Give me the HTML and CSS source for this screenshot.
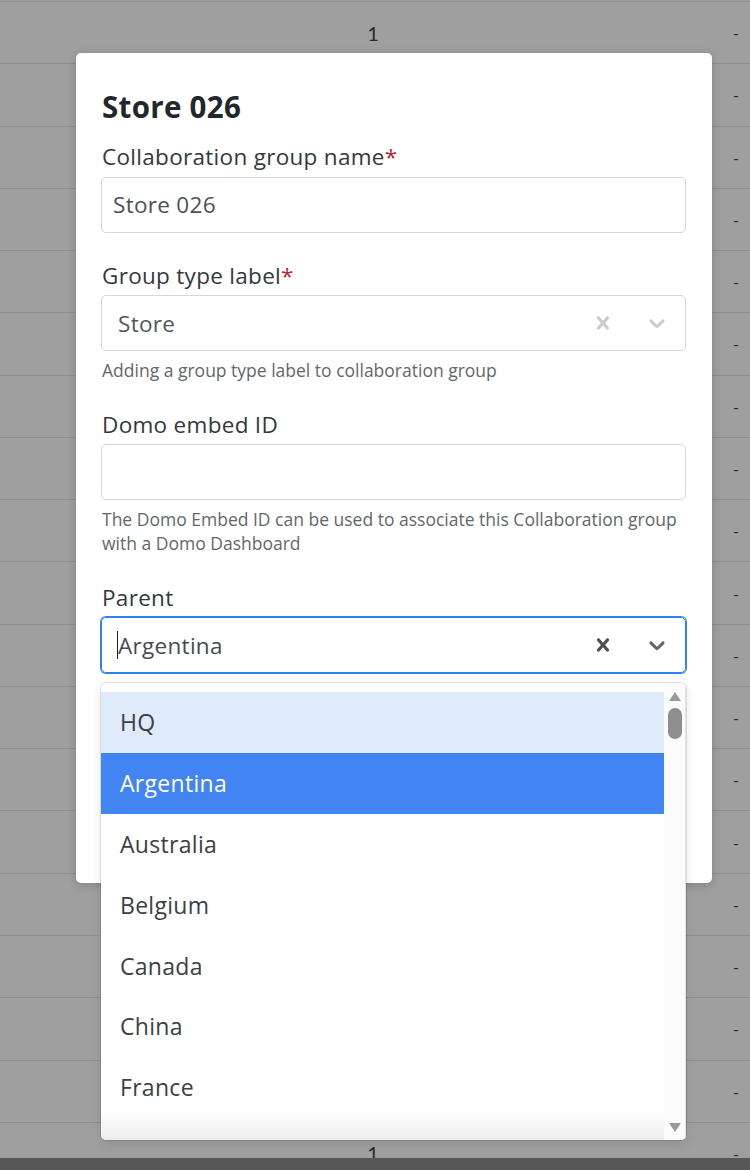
FILE: index.html
```html
<!DOCTYPE html>
<html>
<head>
<meta charset="utf-8">
<link rel="stylesheet" href="styles.css">
</head>
<body>
<div class="page">
  <div class="table">
    <div class="row"><span class="c1">1</span><span class="c2">-</span></div>
    <div class="row"><span class="c1">1</span><span class="c2">-</span></div>
    <div class="row"><span class="c1">1</span><span class="c2">-</span></div>
    <div class="row"><span class="c1">1</span><span class="c2">-</span></div>
    <div class="row"><span class="c1">1</span><span class="c2">-</span></div>
    <div class="row"><span class="c1">1</span><span class="c2">-</span></div>
    <div class="row"><span class="c1">1</span><span class="c2">-</span></div>
    <div class="row"><span class="c1">1</span><span class="c2">-</span></div>
    <div class="row"><span class="c1">1</span><span class="c2">-</span></div>
    <div class="row"><span class="c1">1</span><span class="c2">-</span></div>
    <div class="row"><span class="c1">1</span><span class="c2">-</span></div>
    <div class="row"><span class="c1">1</span><span class="c2">-</span></div>
    <div class="row"><span class="c1">1</span><span class="c2">-</span></div>
    <div class="row"><span class="c1">1</span><span class="c2">-</span></div>
    <div class="row"><span class="c1">1</span><span class="c2">-</span></div>
    <div class="row"><span class="c1">1</span><span class="c2">-</span></div>
    <div class="row"><span class="c1">1</span><span class="c2">-</span></div>
    <div class="row"><span class="c1">1</span><span class="c2">-</span></div>
    <div class="row"><span class="c1">1</span><span class="c2">-</span></div>
  </div>
  <div class="footer"></div>
</div>

<div class="modal">
  <h2 class="title">Store 026</h2>

  <div class="field">
    <div class="label">Collaboration group name<span class="req">*</span></div>
    <div class="input">Store 026</div>
  </div>

  <div class="field">
    <div class="label">Group type label<span class="req">*</span></div>
    <div class="select">
      <div class="value">Store</div>
      <div class="indicators light">
        <span class="ind"><svg viewBox="0 0 20 20" width="26" height="26"><path d="M14.348 14.849c-0.469 0.469-1.229 0.469-1.697 0l-2.651-3.030-2.651 3.029c-0.469 0.469-1.229 0.469-1.697 0-0.469-0.469-0.469-1.229 0-1.697l2.758-3.15-2.759-3.152c-0.469-0.469-0.469-1.228 0-1.697s1.228-0.469 1.697 0l2.652 3.031 2.651-3.031c0.469-0.469 1.228-0.469 1.697 0s0.469 1.229 0 1.697l-2.758 3.152 2.758 3.150c0.469 0.469 0.469 1.229 0 1.698z"/></svg></span>
        <span class="ind"><svg viewBox="0 0 20 20" width="26" height="26"><path d="M4.516 7.548c0.436-0.446 1.043-0.481 1.576 0l3.908 3.747 3.908-3.747c0.533-0.481 1.141-0.446 1.574 0 0.436 0.445 0.408 1.197 0 1.615-0.406 0.418-4.695 4.502-4.695 4.502-0.217 0.223-0.502 0.335-0.787 0.335s-0.57-0.112-0.789-0.335c0 0-4.287-4.084-4.695-4.502s-0.436-1.17 0-1.615z"/></svg></span>
      </div>
    </div>
    <div class="help">Adding a group type label to collaboration group</div>
  </div>

  <div class="field">
    <div class="label">Domo embed ID</div>
    <div class="input"></div>
    <div class="help">The Domo Embed ID can be used to associate this Collaboration group with a Domo Dashboard</div>
  </div>

  <div class="field">
    <div class="label">Parent</div>
    <div class="select-wrap">
      <div class="select focused">
        <div class="value"><span class="caret"></span>Argentina</div>
        <div class="indicators dark">
          <span class="ind"><svg viewBox="0 0 20 20" width="26" height="26"><path d="M14.348 14.849c-0.469 0.469-1.229 0.469-1.697 0l-2.651-3.030-2.651 3.029c-0.469 0.469-1.229 0.469-1.697 0-0.469-0.469-0.469-1.229 0-1.697l2.758-3.15-2.759-3.152c-0.469-0.469-0.469-1.228 0-1.697s1.228-0.469 1.697 0l2.652 3.031 2.651-3.031c0.469-0.469 1.228-0.469 1.697 0s0.469 1.229 0 1.697l-2.758 3.152 2.758 3.150c0.469 0.469 0.469 1.229 0 1.698z"/></svg></span>
          <span class="ind"><svg viewBox="0 0 20 20" width="26" height="26"><path d="M4.516 7.548c0.436-0.446 1.043-0.481 1.576 0l3.908 3.747 3.908-3.747c0.533-0.481 1.141-0.446 1.574 0 0.436 0.445 0.408 1.197 0 1.615-0.406 0.418-4.695 4.502-4.695 4.502-0.217 0.223-0.502 0.335-0.787 0.335s-0.57-0.112-0.789-0.335c0 0-4.287-4.084-4.695-4.502s-0.436-1.17 0-1.615z"/></svg></span>
        </div>
      </div>
      <div class="help">You can choose a parent collaboration group to build a hierarchy</div>

      <div class="menu">
        <div class="opts">
          <div class="opt hover">HQ</div>
          <div class="opt selected">Argentina</div>
          <div class="opt">Australia</div>
          <div class="opt">Belgium</div>
          <div class="opt">Canada</div>
          <div class="opt">China</div>
          <div class="opt">France</div>
          <div class="opt">Mexico</div>
        </div>
        <div class="sb">
          <svg class="arrow" viewBox="0 0 12 9" width="12" height="9"><polygon points="6,0 12,9 0,9"/></svg>
          <div class="thumb"></div>
          <div class="sb-space"></div>
          <svg class="arrow" viewBox="0 0 12 9" width="12" height="9"><polygon points="0,0 12,0 6,9"/></svg>
        </div>
        <div class="fade"></div>
      </div>
    </div>
  </div>
</div>
</body>
</html>
```

FILE: styles.css
```css
* { box-sizing: border-box; }

body {
  margin: 0;
  font-family: "Open Sans", "Noto Sans", sans-serif;
}

.page {
  height: 1170px;
  display: flex;
  flex-direction: column;
  background: #9f9f9f;
  overflow: hidden;
}

.table {
  flex: 1;
  overflow: hidden;
  margin-top: 1px;
  font-family: Lato, sans-serif;
}

.row {
  height: 62.27px;
  border-top: 1px solid #8d8d8d;
  display: grid;
  grid-template-columns: 1fr 28px;
  align-items: center;
  font-size: 20px;
  color: #262a2e;
}

.c1 {
  text-align: center;
  padding-left: 24px;
}

.c2 {
  text-align: center;
  font-size: 16px;
}

.footer {
  height: 12px;
  background: #575757;
}

.modal {
  position: absolute;
  left: 76px;
  top: 53px;
  width: 636px;
  height: 830px;
  padding: 36px 26px 0 25px;
  background: #fff;
  border-radius: 5px;
  box-shadow: 0 2px 10px rgba(0, 0, 0, 0.18);
}

.title {
  margin: 0 0 20px;
  padding-left: 1px;
  font-size: 29.5px;
  letter-spacing: 0.3px;
  line-height: 36px;
  font-weight: 700;
  color: #22272c;
}

.field {
  margin-bottom: 31px;
}

.label {
  padding-left: 1px;
  font-size: 22.5px;
  letter-spacing: 0.3px;
  line-height: 24px;
  color: #33383d;
  margin-bottom: 7.5px;
}

.req {
  color: #b3262e;
}

.input {
  height: 56px;
  border: 1px solid #d3d7db;
  border-radius: 5px;
  padding: 0 11px;
  display: flex;
  align-items: center;
  font-size: 22.5px;
  letter-spacing: 0.3px;
  color: #4c5157;
}

.select {
  height: 56px;
  border: 1px solid #d3d7db;
  border-radius: 5px;
  display: flex;
  align-items: center;
}

.select.focused {
  border-color: #2f80f0;
  box-shadow: 0 0 0 1px #2f80f0;
}

.value {
  flex: 1;
  padding-left: 16px;
  font-size: 22.5px;
  letter-spacing: 0.3px;
  color: #52575c;
  display: flex;
  align-items: center;
}

.focused .value {
  color: #464b50;
}

.caret {
  width: 1px;
  height: 28px;
  background: #222;
  margin-left: -1px;
  margin-right: 0;
}

.indicators {
  display: flex;
  padding-right: 1px;
}

.ind {
  width: 54px;
  display: flex;
  justify-content: center;
  align-items: center;
}

.light svg { fill: #cccccc; }
.dark svg { fill: #4f4f4f; }
.dark .ind:last-child svg { fill: #666; }

.help {
  margin-top: 6.5px;
  padding-left: 1px;
  font-size: 17.5px;
  line-height: 24px;
  color: #62676c;
}

.select-wrap {
  position: relative;
}

.menu {
  position: absolute;
  left: 0;
  right: 0;
  top: 66px;
  height: 457px;
  background: #fff;
  border-radius: 5px;
  box-shadow: 0 0 0 1px rgba(0, 0, 0, 0.1), 0 4px 11px rgba(0, 0, 0, 0.1);
  display: flex;
  overflow: hidden;
}

.opts {
  flex: 1;
  padding-top: 9px;
  overflow: hidden;
}

.opt {
  height: 60.8px;
  padding-left: 19px;
  display: flex;
  align-items: center;
  font-size: 23px;
  letter-spacing: 0.3px;
  color: #3b4045;
}

.opt.hover {
  background: #dfeafb;
}

.opt.selected {
  background: #4384f3;
  color: #fff;
}

.sb {
  width: 22px;
  background: #fbfbfb;
  border-right: 1px solid #e2e2e2;
  display: flex;
  flex-direction: column;
  align-items: center;
  padding: 9px 0 8px;
  position: relative;
  z-index: 2;
}

.arrow {
  fill: #9b9b9b;
}

.thumb {
  margin-top: 7px;
  width: 14px;
  height: 31px;
  border-radius: 7px;
  background: #8e8e8e;
}

.sb-space {
  flex: 1;
}

.fade {
  position: absolute;
  left: 0;
  right: 0;
  bottom: 0;
  height: 28px;
  background: linear-gradient(to bottom, rgba(255,255,255,0), #ececec);
  z-index: 1;
}
```
